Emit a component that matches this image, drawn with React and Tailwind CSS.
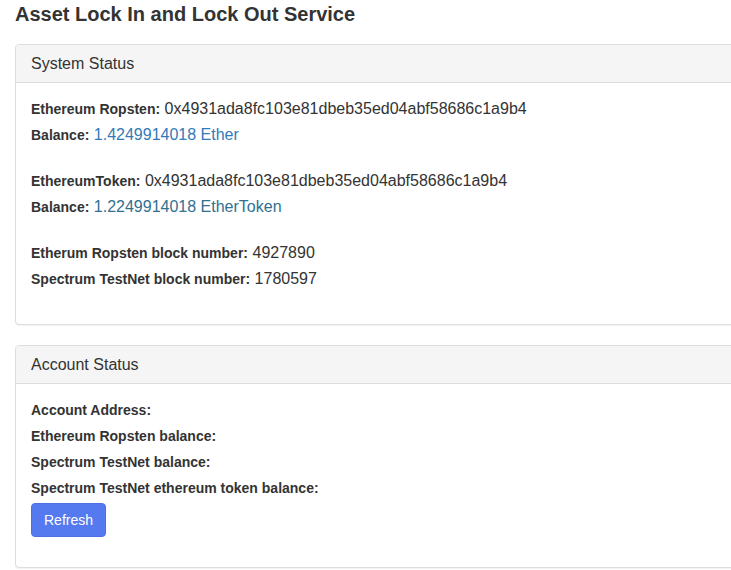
import React from 'react'

function Row({ label, children, className = '' }) {
  return (
    <div className={`leading-[20px] h-[20px] whitespace-nowrap ${className}`}>
      <span className="text-[14px] font-bold">{label}</span>{' '}
      <span className="text-[16px]">{children}</span>
    </div>
  )
}

function Panel({ title, children, bodyClass = '' }) {
  return (
    <div className="w-[760px] mb-[20px] border border-[#ddd] rounded-[4px] bg-white shadow-[0_1px_1px_rgba(0,0,0,0.05)]">
      <div className="bg-[#f5f5f5] border-b border-[#ddd] px-[15px] py-[10px] rounded-t-[3px]">
        <h3 className="text-[16px] leading-[17px] text-[#333]">{title}</h3>
      </div>
      <div className={`px-[15px] pt-[16px] ${bodyClass}`}>{children}</div>
    </div>
  )
}

export default function App() {
  return (
    <div
      className="w-[731px] h-[570px] overflow-hidden bg-white text-[#333]"
      style={{ fontFamily: '"Liberation Sans", Arial, sans-serif' }}
    >
      <div className="px-[15px]">
        <h1 className="text-[20px] font-bold leading-[22px] mt-[3px] mb-[19px]">
          Asset Lock In and Lock Out Service
        </h1>

        <Panel title="System Status" bodyClass="pb-[35px]">
          <div className="flex flex-col gap-[6px]">
            <Row label="Ethereum Ropsten:">0x4931ada8fc103e81dbeb35ed04abf58686c1a9b4</Row>
            <Row label="Balance:">
              <span className="text-[#337ab7]">1.4249914018 Ether</span>
            </Row>
            <Row label="EthereumToken:" className="mt-[20px]">
              0x4931ada8fc103e81dbeb35ed04abf58686c1a9b4
            </Row>
            <Row label="Balance:">
              <span className="text-[#31708f]">1.2249914018 EtherToken</span>
            </Row>
            <Row label="Etherum Ropsten block number:" className="mt-[20px]">4927890</Row>
            <Row label="Spectrum TestNet block number:">1780597</Row>
          </div>
        </Panel>

        <Panel title="Account Status" bodyClass="pb-[30px]">
          <div className="flex flex-col gap-[6px]">
            <Row label="Account Address:" />
            <Row label="Ethereum Ropsten balance:" />
            <Row label="Spectrum TestNet balance:" />
            <Row label="Spectrum TestNet ethereum token balance:" />
          </div>
          <button className="mt-[5px] bg-[#5579ee] text-white text-[14px] leading-[20px] px-[12px] py-[6px] rounded-[4px] border border-[#4d70e6]">
            Refresh
          </button>
        </Panel>
      </div>
    </div>
  )
}
